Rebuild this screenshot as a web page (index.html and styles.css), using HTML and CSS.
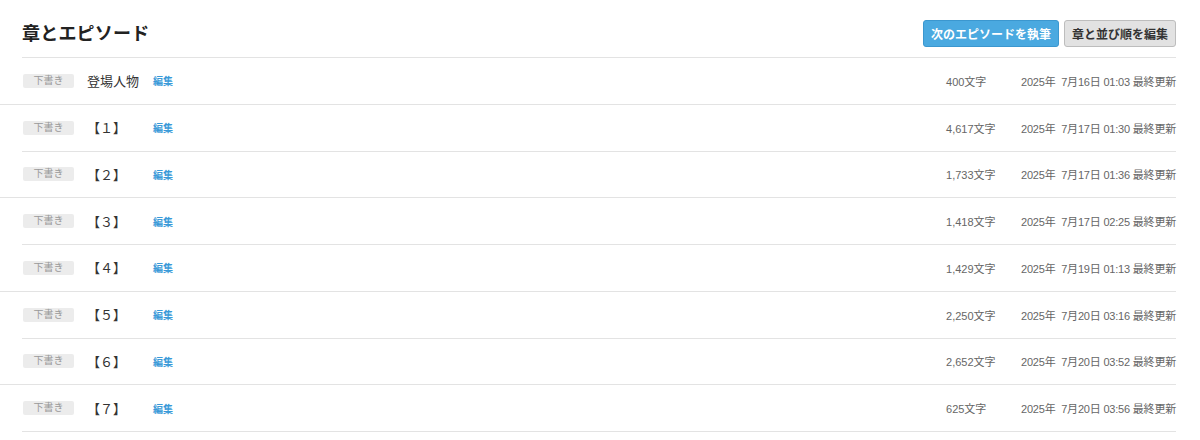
FILE: index.html
```html
<!DOCTYPE html>
<html lang="ja">
<head>
    <meta charset="UTF-8">
    <meta name="viewport" content="width=device-width, initial-scale=1.0">
    <title>章とエピソード</title>
    <link rel="stylesheet" href="styles.css">
</head>
<body>
    <main class="episodes">
        <!-- Header -->
        <header class="episodes-header">
            <h2>章とエピソード</h2>
            <div class="actions">
                <a class="btn btn-primary" href="#new">次のエピソードを執筆</a>
                <a class="btn btn-default" href="#order">章と並び順を編集</a>
            </div>
        </header>

        <!-- Episode list -->
        <ul class="episode-list">
            <li class="episode">
                <span class="badge">下書き</span>
                <span class="episode-title">登場人物</span>
                <a class="edit" href="#edit">編集</a>
                <span class="chars">400文字</span>
                <span class="updated">2025年&nbsp;&nbsp;7月16日 01:03 最終更新</span>
            </li>
            <li class="episode">
                <span class="badge">下書き</span>
                <span class="episode-title">【１】</span>
                <a class="edit" href="#edit">編集</a>
                <span class="chars">4,617文字</span>
                <span class="updated">2025年&nbsp;&nbsp;7月17日 01:30 最終更新</span>
            </li>
            <li class="episode">
                <span class="badge">下書き</span>
                <span class="episode-title">【２】</span>
                <a class="edit" href="#edit">編集</a>
                <span class="chars">1,733文字</span>
                <span class="updated">2025年&nbsp;&nbsp;7月17日 01:36 最終更新</span>
            </li>
            <li class="episode">
                <span class="badge">下書き</span>
                <span class="episode-title">【３】</span>
                <a class="edit" href="#edit">編集</a>
                <span class="chars">1,418文字</span>
                <span class="updated">2025年&nbsp;&nbsp;7月17日 02:25 最終更新</span>
            </li>
            <li class="episode">
                <span class="badge">下書き</span>
                <span class="episode-title">【４】</span>
                <a class="edit" href="#edit">編集</a>
                <span class="chars">1,429文字</span>
                <span class="updated">2025年&nbsp;&nbsp;7月19日 01:13 最終更新</span>
            </li>
            <li class="episode">
                <span class="badge">下書き</span>
                <span class="episode-title">【５】</span>
                <a class="edit" href="#edit">編集</a>
                <span class="chars">2,250文字</span>
                <span class="updated">2025年&nbsp;&nbsp;7月20日 03:16 最終更新</span>
            </li>
            <li class="episode">
                <span class="badge">下書き</span>
                <span class="episode-title">【６】</span>
                <a class="edit" href="#edit">編集</a>
                <span class="chars">2,652文字</span>
                <span class="updated">2025年&nbsp;&nbsp;7月20日 03:52 最終更新</span>
            </li>
            <li class="episode">
                <span class="badge">下書き</span>
                <span class="episode-title">【７】</span>
                <a class="edit" href="#edit">編集</a>
                <span class="chars">625文字</span>
                <span class="updated">2025年&nbsp;&nbsp;7月20日 03:56 最終更新</span>
            </li>
        </ul>
    </main>
</body>
</html>
```

FILE: styles.css
```css
/* Reset */
* {
    margin: 0;
    padding: 0;
    box-sizing: border-box;
}

body {
    font-family: "Liberation Sans", "Noto Sans CJK JP", sans-serif;
    background-color: #fff;
    color: #333;
}

a {
    text-decoration: none;
}

/* Wrapper */
.episodes {
    padding: 0 24px 0 22px;
}

/* Header */
.episodes-header {
    display: flex;
    justify-content: space-between;
    align-items: center;
    height: 58px;
    padding-top: 9px;
    border-bottom: 1px solid #e3e3e3;
}

.episodes-header h2 {
    font-size: 18px;
    font-weight: bold;
    color: #222;
    letter-spacing: 0.2px;
    margin-top: -2px;
}

.actions {
    display: flex;
    gap: 5px;
}

.btn {
    display: inline-flex;
    align-items: center;
    height: 27px;
    padding: 0 7px;
    font-size: 12px;
    font-weight: bold;
    border-radius: 3px;
    border: 1px solid;
}

.btn-primary {
    background-color: #4aa9e0;
    border-color: #3b97cf;
    color: #fff;
}

.btn-default {
    background-color: #e2e2e2;
    border-color: #bdbdbd;
    color: #333;
}

/* Episode list */
.episode-list {
    list-style: none;
}

.episode {
    display: flex;
    align-items: center;
    height: 46.75px;
    border-bottom: 1px solid #e3e3e3;
}

.episode:nth-child(odd) {
    margin-left: -22px;
    padding-left: 22px;
}

.badge {
    width: 51px;
    height: 14px;
    line-height: 14px;
    margin-left: 1px;
    text-align: center;
    font-size: 10px;
    color: #999;
    background-color: #ececec;
    border-radius: 2px;
}

.episode-title {
    width: 66px;
    margin-left: 13px;
    font-size: 13px;
    color: #333;
}

.edit {
    font-size: 10px;
    font-weight: bold;
    color: #3a9ad8;
}

.chars {
    margin-left: auto;
    width: 75px;
    font-size: 11px;
    color: #666;
}

.updated {
    font-size: 11px;
    letter-spacing: -0.2px;
    color: #666;
}
```
